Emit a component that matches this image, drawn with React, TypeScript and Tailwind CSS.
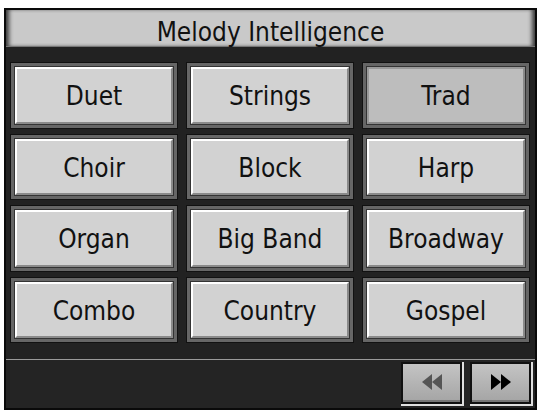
const STYLES = [
  'Duet', 'Strings', 'Trad',
  'Choir', 'Block', 'Harp',
  'Organ', 'Big Band', 'Broadway',
  'Combo', 'Country', 'Gospel',
]

const SELECTED = 'Trad'

function StyleButton({ label }: { label: string }) {
  const active = label === SELECTED
  return (
    <div className="border border-[#111] bg-[#666] p-[3px]">
      <div className="border border-[#333] h-full">
        <div
          className={
            active
              ? 'h-full flex items-center justify-center bg-[#bdbdbd] border-2 border-t-[#9a9a9a] border-l-[#9a9a9a] border-r-[#8a8a8a] border-b-[#8a8a8a]'
              : 'h-full flex items-center justify-center bg-[#d2d2d2] border-2 border-t-white border-l-white border-r-[#8a8a8a] border-b-[#8a8a8a]'
          }
        >
          <span className="text-[26px] leading-none text-[#111] pt-[2px]">{label}</span>
        </div>
      </div>
    </div>
  )
}

function NavButton({ dir, dim }: { dir: 'prev' | 'next'; dim?: boolean }) {
  const fill = dim ? '#555' : '#000'
  return (
    <div className="w-[63px] h-[44px] border-r-2 border-b-2 border-[#e0e0e0] bg-[#111] p-[2px]">
      <div className="h-full flex items-center justify-center bg-gradient-to-b from-[#c4c4c4] to-[#a6a6a6] border-b-2 border-[#777]">
        <svg width="24" height="18" viewBox="0 0 24 18">
          {dir === 'next' ? (
            <>
              <polygon points="2,1 12,9 2,17" fill={fill} />
              <polygon points="12,1 22,9 12,17" fill={fill} />
            </>
          ) : (
            <>
              <polygon points="12,1 2,9 12,17" fill={fill} />
              <polygon points="22,1 12,9 22,17" fill={fill} />
            </>
          )}
        </svg>
      </div>
    </div>
  )
}

export default function App() {
  return (
    <div
      className="w-[539px] h-[412px] bg-white pl-[4px] pt-[8px]"
      style={{ fontFamily: '"DejaVu Sans Condensed", "DejaVu Sans", sans-serif' }}
    >
      <div className="w-[533px] h-[402px] bg-[#222] border-2 border-[#0a0a0a] flex flex-col">
        {/* Titel */}
        <div className="h-[37px] bg-[#c9c9c9] border-b border-[#777] flex items-center justify-center shadow-[inset_5px_0_4px_-2px_#3a3a3a,inset_-5px_0_4px_-2px_#3a3a3a]">
          <span className="text-[26px] leading-none text-[#111] pt-[7px]">Melody Intelligence</span>
        </div>

        {/* Stile */}
        <div className="mt-[15px] ml-[4px] w-[520px] h-[281px] grid grid-cols-3 grid-rows-4 gap-x-[8px] gap-y-[5px]">
          {STYLES.map((s) => (
            <StyleButton key={s} label={s} />
          ))}
        </div>

        {/* Navigation */}
        <div className="mt-[16px] border-t border-[#9a9a9a] flex-1 bg-[#242424] flex justify-end items-start pt-[2px] pr-[2px] gap-[6px]">
          <NavButton dir="prev" dim />
          <NavButton dir="next" />
        </div>
      </div>
    </div>
  )
}
